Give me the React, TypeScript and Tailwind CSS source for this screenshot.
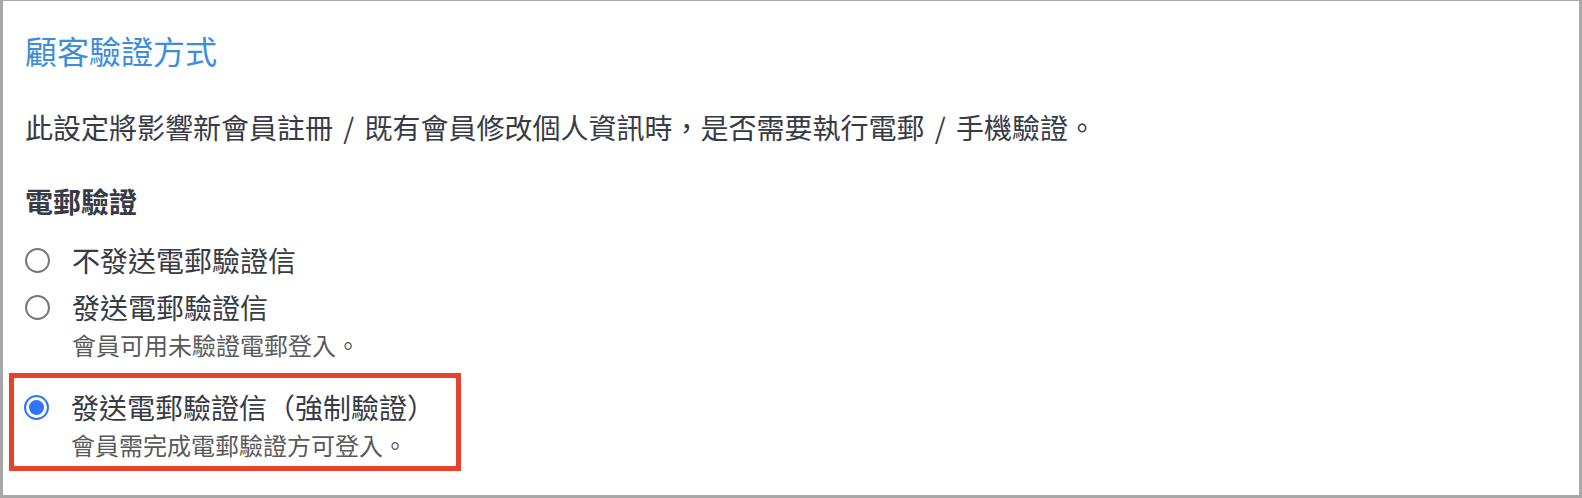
import React, { useState } from 'react';

interface Option {
  id: string;
  label: string;
  hint?: string;
  highlight?: boolean;
}

const options: Option[] = [
  { id: 'none', label: '不發送電郵驗證信' },
  { id: 'send', label: '發送電郵驗證信', hint: '會員可用未驗證電郵登入。' },
  { id: 'force', label: '發送電郵驗證信（強制驗證）', hint: '會員需完成電郵驗證方可登入。', highlight: true },
];

function Radio({ checked }: { checked: boolean }) {
  if (checked) {
    return (
      <span className="flex h-[25px] w-[25px] shrink-0 items-center justify-center rounded-full border-2 border-[#2f74f5] bg-white">
        <span className="h-[15px] w-[15px] rounded-full bg-[#2f74f5]" />
      </span>
    );
  }
  return <span className="h-[25px] w-[25px] shrink-0 rounded-full border-2 border-[#777777] bg-white" />;
}

function Slash() {
  return <span className="px-[4px]"> / </span>;
}

export default function App() {
  const [value, setValue] = useState('force');

  return (
    <div
      className="h-[498px] w-[1582px] border-b-[3px] border-l-[3px] border-r-[3px] border-t border-[#a8a8a8] bg-white"
      style={{ fontFamily: '"Noto Sans CJK TC", "Noto Sans", sans-serif' }}
    >
      <div className="flex flex-col pl-[22px] pt-[29px]">
        <h1 className="text-[32px] leading-[40px] text-[#3d8ddf]">顧客驗證方式</h1>
        <p className="mt-[39px] text-[28px] leading-[36px] text-[#383b45]">
          此設定將影響新會員註冊<Slash />既有會員修改個人資訊時，是否需要執行電郵<Slash />手機驗證。
        </p>
        <h2 className="mt-[38px] text-[28px] font-bold leading-[36px] text-[#383b45]">電郵驗證</h2>

        <div className="mt-[23px] flex flex-col">
          {options.map((opt, i) => (
            <label
              key={opt.id}
              onClick={() => setValue(opt.id)}
              className={
                opt.highlight
                  ? '-ml-[16px] mt-[12px] flex w-[452px] cursor-pointer flex-col border-[5px] border-[#e8412c] pb-[5px] pl-[10px] pt-[11px]'
                  : i === 0
                    ? 'flex cursor-pointer flex-col'
                    : 'mt-[11px] flex cursor-pointer flex-col'
              }
            >
              <div className="flex items-center gap-[22px]">
                <Radio checked={value === opt.id} />
                <span className="text-[28px] leading-[36px] text-[#383b45]">{opt.label}</span>
              </div>
              {opt.hint && (
                <span className="mt-[4px] pl-[47px] text-[24px] leading-[32px] text-[#5a5a5a]">{opt.hint}</span>
              )}
            </label>
          ))}
        </div>
      </div>
    </div>
  );
}
